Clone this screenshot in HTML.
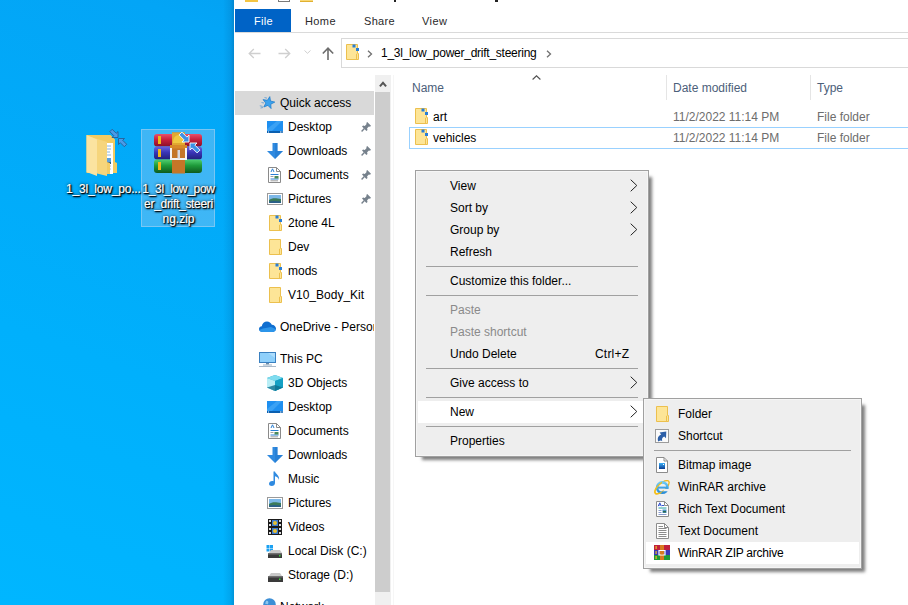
<!DOCTYPE html>
<html><head><meta charset="utf-8">
<style>
*{margin:0;padding:0;box-sizing:border-box}
html,body{width:908px;height:605px;overflow:hidden}
body{position:relative;font-family:"Liberation Sans",sans-serif;font-size:12px;color:#000;
background:linear-gradient(200deg,#0592e0 0%,#03a5f6 30%,#00b0fc 70%,#00b6ff 100%)}
.a{position:absolute}
.t{position:absolute;white-space:pre;line-height:17px;font-size:12px}
svg{position:absolute;overflow:visible}
#win{position:absolute;left:234px;top:0;width:674px;height:605px;background:#fff}
#shadow{position:absolute;left:223px;top:0;width:11px;height:605px;background:linear-gradient(90deg,rgba(0,60,120,0) 0%,rgba(0,60,120,.12) 70%,rgba(0,50,100,.25) 100%)}
.menu{position:absolute;background:#eeeeee;border:1px solid #a0a0a0;box-shadow:inset 0 0 0 1px #f5f5f5,5px 5px 3px -2px rgba(0,0,0,.5)}
.sep{position:absolute;height:1px;background:#a0a0a0}
.hl{position:absolute;background:#fff}
.dis{color:#8a8a8a}
</style></head>
<body>
<div id="shadow"></div>
<!-- desktop icons -->
<div class="a" style="left:141px;top:129px;width:74px;height:98px;background:rgba(205,212,238,.3);border:1px solid rgba(224,226,242,.36)"></div>
<svg style="left:84px;top:128px" width="46" height="50" viewBox="0 0 46 50"><path d="M2.5 7H26.5L31 11.5V34L33 35V45H2.5Z" fill="#f3cb62"/><path d="M21 15H29V46H19Z" fill="#ffffff"/><path d="M22 18H27M22 21H27M22 24H26M22 27H27" stroke="#8ab4dc" stroke-width="1"/><rect x="21" y="30" width="6" height="4" fill="#5aa0e0"/><rect x="21" y="34" width="6" height="2" fill="#2a5a80"/><path d="M22 38H27M22 41H27M22 44H26" stroke="#b0b8c8" stroke-width="1"/><path d="M7 9L23 14V48L7 44Z" fill="#f6d57c"/><path d="M2.5 7L13 11.5V48L2.5 44Z" fill="#fbe3a0"/><path d="M23 34L26 35V46L23 46Z" fill="#f3cc66"/><path d="M10 0L18 0L10 8Z" fill="none"/><path d="M34 9.5V3.5L32.2 5.3L28.2 1.3L25.8 3.7L29.8 7.7L28 9.5Z" fill="#4a9be8" stroke="#26568c" stroke-width=".8" stroke-linejoin="round"/><path d="M34.5 10.5H40.5L38.7 12.3L42.7 16.3L40.3 18.7L36.3 14.7L34.5 16.5Z" fill="#4a9be8" stroke="#26568c" stroke-width=".8" stroke-linejoin="round"/></svg>
<svg style="left:154px;top:131px" width="50" height="43" viewBox="0 0 50 43"><defs><linearGradient id="gr" x1="0" y1="0" x2="0" y2="1"><stop offset="0" stop-color="#e8506a"/><stop offset=".45" stop-color="#c8203c"/><stop offset="1" stop-color="#8a1028"/></linearGradient><linearGradient id="gb" x1="0" y1="0" x2="0" y2="1"><stop offset="0" stop-color="#6a66e0"/><stop offset=".45" stop-color="#3a36b8"/><stop offset="1" stop-color="#22207a"/></linearGradient><linearGradient id="gg" x1="0" y1="0" x2="0" y2="1"><stop offset="0" stop-color="#50d070"/><stop offset=".45" stop-color="#1e9a3a"/><stop offset="1" stop-color="#0e5a20"/></linearGradient></defs><rect x="0" y="3" width="48" height="12.5" rx="3" fill="url(#gr)"/><rect x="0" y="15.5" width="48" height="13" rx="3" fill="url(#gb)"/><rect x="0" y="28.5" width="48" height="13.5" rx="3" fill="url(#gg)"/><rect x="4" y="5" width="3" height="8" fill="#f0b818"/><rect x="4" y="18" width="3" height="8" fill="#f0b818"/><rect x="4" y="31" width="3" height="8" fill="#f0b818"/><rect x="18" y="1.5" width="13" height="41" fill="#c47628"/><path d="M18 1.5H31V15H18Z" fill="#e0a830"/><path d="M19 12C19 6 22 4 25 4C28 4 30 6 30 12Z" fill="#f0c840"/><rect x="16" y="14" width="17" height="3.5" fill="#d88a28"/><path d="M17 17V28H32V17" fill="none" stroke="#f4f4f4" stroke-width="2"/><path d="M23.5 19H26V27.5H23.5Z" fill="#d8d8e0"/><path d="M35 4L35 11L28 11L30.1 8.9L25.1 3.9L27.9 1.1L32.9 6.1Z" fill="#3c90e4" stroke="#fff" stroke-width=".9" stroke-linejoin="round"/><path d="M36 12L43 12L40.9 14.1L45.9 19.1L43.1 21.9L38.1 16.9L36 19Z" fill="#3c90e4" stroke="#fff" stroke-width=".9" stroke-linejoin="round"/></svg>
<div class="t" style="left:66px;top:181px;color:#fff;letter-spacing:-0.2px;text-shadow:1px 1px 1px #000,1px 1px 2px #000,0 0 3px rgba(0,0,0,.75);-webkit-text-stroke:0.2px #fff">1_3l_low_po...</div>
<div class="t" style="left:141px;top:181px;width:75px;text-align:center;color:#fff;text-shadow:1px 1px 1px #000,1px 1px 2px #000,0 0 3px rgba(0,0,0,.75);-webkit-text-stroke:0.2px #fff;letter-spacing:-0.3px">1_3l_low_pow</div>
<div class="t" style="left:141px;top:196px;width:75px;text-align:center;color:#fff;text-shadow:1px 1px 1px #000,1px 1px 2px #000,0 0 3px rgba(0,0,0,.75);-webkit-text-stroke:0.2px #fff;letter-spacing:-0.3px">er_drift_steeri</div>
<div class="t" style="left:141px;top:211px;width:75px;text-align:center;color:#fff;text-shadow:1px 1px 1px #000,1px 1px 2px #000,0 0 3px rgba(0,0,0,.75);-webkit-text-stroke:0.2px #fff">ng.zip</div>
<div id="win"></div>
<!-- title bar remnants -->
<div class="a" style="left:245px;top:0;width:13px;height:2px;background:#f4c542"></div>
<div class="a" style="left:278px;top:0;width:12px;height:2px;border:1px solid #7a7a7a;border-top:0;background:#fff"></div>
<div class="a" style="left:300px;top:0;width:13px;height:2px;background:#f8d775;border-bottom:1px solid #e0b030"></div>
<div class="a" style="left:394px;top:0;width:2px;height:2px;background:#222"></div>
<div class="a" style="left:495px;top:0;width:3px;height:2px;background:#222"></div>
<!-- ribbon tabs -->
<div class="a" style="left:235px;top:9px;width:56px;height:23px;background:#0063c6"></div>
<div class="t" style="left:254px;top:13px;color:#fff;font-size:11px;letter-spacing:0.3px">File</div>
<div class="t" style="left:305px;top:13px;color:#2a2a2a;font-size:11px;letter-spacing:0.4px">Home</div>
<div class="t" style="left:364px;top:13px;color:#2a2a2a;font-size:11px;letter-spacing:0.3px">Share</div>
<div class="t" style="left:422px;top:13px;color:#2a2a2a;font-size:11px;letter-spacing:0.4px">View</div>
<div class="a" style="left:235px;top:32px;width:673px;height:1px;background:#dadada"></div>
<!-- nav buttons -->
<svg style="left:248px;top:48px" width="13" height="11" viewBox="0 0 13 11"><path d="M12.5 5.5H1.2M5.8 1L1.2 5.5L5.8 10" fill="none" stroke="#cfcfcf" stroke-width="1.3"/></svg>
<svg style="left:278px;top:48px" width="13" height="11" viewBox="0 0 13 11"><path d="M0.5 5.5H11.8M7.2 1L11.8 5.5L7.2 10" fill="none" stroke="#cfcfcf" stroke-width="1.3"/></svg>
<svg style="left:304px;top:50px" width="7" height="4" viewBox="0 0 7 4"><path d="M0.5 0.5L3.5 3.3L6.5 0.5" fill="none" stroke="#d0d0d0" stroke-width="1"/></svg>
<svg style="left:322px;top:47px" width="12" height="13" viewBox="0 0 12 13"><path d="M6 13V1.5M0.8 6.5L6 1.2L11.2 6.5" fill="none" stroke="#6d6d6d" stroke-width="1.6"/></svg>
<!-- address bar -->
<div class="a" style="left:341px;top:38px;width:580px;height:30px;border:1px solid #d9d9d9;background:#fff"></div>
<svg style="left:346px;top:44px" width="14" height="16" viewBox="0 0 14 16"><path d="M0.5 0.5H11.5V9.5H12.5V15.5H0.5Z" fill="#fde597" stroke="#ecc04e"/><path d="M10.5 15.5V9.8" stroke="#ecc04e"/><rect x="6.5" y="0.5" width="3" height="3" fill="#2a7ed6"/><rect x="10" y="4" width="3" height="3" fill="#2a7ed6"/></svg>
<svg style="left:367px;top:50px" width="6" height="8" viewBox="0 0 6 8"><path d="M1 0.8L4.5 4L1 7.2" fill="none" stroke="#707070" stroke-width="1.3"/></svg>
<div class="t" style="left:381px;top:45px;letter-spacing:-0.25px">1_3l_low_power_drift_steering</div>
<svg style="left:546px;top:50px" width="6" height="8" viewBox="0 0 6 8"><path d="M1 0.8L4.5 4L1 7.2" fill="none" stroke="#707070" stroke-width="1.3"/></svg>
<!-- nav pane scrollbar -->
<div class="a" style="left:375px;top:75px;width:16px;height:530px;background:#f0f0f0"></div>
<div class="a" style="left:375px;top:92px;width:15px;height:500px;background:#cdcdcd"></div>
<svg style="left:379px;top:81px" width="8" height="6" viewBox="0 0 8 6"><path d="M0.9 5.3L4 1.8L7.1 5.3" fill="none" stroke="#555" stroke-width="2"/></svg>
<div class="a" style="left:393px;top:75px;width:1px;height:530px;background:#f6f6f6"></div>
<!-- quick access highlight -->
<div class="a" style="left:235px;top:91px;width:139px;height:24px;background:#d9d9d9"></div>
<!-- nav pane items -->
<svg style="left:259px;top:96px" width="17" height="14" viewBox="0 0 17 14"><path d="M10.8 0.6L11.5 5.0L15.8 6.1L11.8 8.2L12.1 12.6L8.9 9.4L4.8 11.0L6.8 7.1L4.0 3.6L8.4 4.3Z" fill="#3aa2ee" stroke="#1a78c8" stroke-width="0.7" stroke-linejoin="round"/><path d="M5.5 1.5L8 2.2M2.5 6.5L5 7M0.8 9.8L3.6 10.4M1.5 12L4 11.5" stroke="#3a8ad0" stroke-width="0.8" opacity=".8"/></svg>
<div class="t" style="left:280px;top:95px">Quick access</div>

<svg style="left:267px;top:121px" width="16" height="12" viewBox="0 0 16 12"><rect x="0" y="0" width="16" height="12" fill="#1e8ff0"/><path d="M10 0H15L5 10H0V8Z" fill="#4cadf7" opacity=".6"/><rect x="0" y="10" width="16" height="2" fill="#0a5fb0"/><rect x="1" y="10.5" width="1" height="1" fill="#fff"/><rect x="13" y="10.5" width="1" height="1" fill="#fff"/><rect x="14.5" y="10.5" width="1" height="1" fill="#fff"/></svg>
<div class="t" style="left:288px;top:119px">Desktop</div>
<svg style="left:267px;top:143px" width="16" height="16" viewBox="0 0 16 16"><path d="M5.5 0H10.5V8H16L8 16L0 8H5.5Z" fill="#2f8ae0"/><path d="M8 0H10.5V8H16L8 16Z" fill="#1f75cc" opacity=".5"/></svg>
<div class="t" style="left:288px;top:143px">Downloads</div>
<svg style="left:268px;top:167px" width="13" height="16" viewBox="0 0 13 16"><path d="M0.5 0.5H8.5L12.5 4.5V15.5H0.5Z" fill="#fff" stroke="#8a8a8a"/><path d="M8.5 0.5V4.5H12.5" fill="none" stroke="#8a8a8a"/><path d="M3 5L4.5 1.8L6 5" fill="none" stroke="#2a7fd4" stroke-width="1"/><path d="M2.5 7.5H10.5M2.5 12H10.5" stroke="#2a7fd4" stroke-width="1"/><path d="M2.5 9.5H5.5M2.5 13.8H10" stroke="#888" stroke-width="0.8"/><rect x="6.5" y="9" width="4" height="2.5" fill="#4a8a5a"/></svg>
<div class="t" style="left:288px;top:167px">Documents</div>
<svg style="left:267px;top:193px" width="16" height="12" viewBox="0 0 16 12"><rect x="0.5" y="0.5" width="15" height="11" fill="#fff" stroke="#9a9a9a"/><rect x="2" y="2" width="12" height="8" fill="#7db8e8"/><path d="M2 7C5 5 8 5 14 6V10H2Z" fill="#3b7a5a"/><path d="M2 8.5C6 7.5 10 8 14 8.5V10H2Z" fill="#2a5f8a"/></svg>
<div class="t" style="left:288px;top:191px">Pictures</div>
<svg style="left:361px;top:122px" width="10" height="10" viewBox="0 0 10 10"><path d="M6.2 0L10 3.8L9 4.7L7.9 4.4L6.1 6.2L6.5 7.9L5.4 9L1 4.6L2.1 3.5L3.8 3.9L5.6 2.1L5.3 1Z" fill="#76818c"/><path d="M3.4 6.6L0.6 9.4" stroke="#76818c" stroke-width="1.4"/></svg>
<svg style="left:361px;top:146px" width="10" height="10" viewBox="0 0 10 10"><path d="M6.2 0L10 3.8L9 4.7L7.9 4.4L6.1 6.2L6.5 7.9L5.4 9L1 4.6L2.1 3.5L3.8 3.9L5.6 2.1L5.3 1Z" fill="#76818c"/><path d="M3.4 6.6L0.6 9.4" stroke="#76818c" stroke-width="1.4"/></svg>
<svg style="left:361px;top:170px" width="10" height="10" viewBox="0 0 10 10"><path d="M6.2 0L10 3.8L9 4.7L7.9 4.4L6.1 6.2L6.5 7.9L5.4 9L1 4.6L2.1 3.5L3.8 3.9L5.6 2.1L5.3 1Z" fill="#76818c"/><path d="M3.4 6.6L0.6 9.4" stroke="#76818c" stroke-width="1.4"/></svg>
<svg style="left:361px;top:194px" width="10" height="10" viewBox="0 0 10 10"><path d="M6.2 0L10 3.8L9 4.7L7.9 4.4L6.1 6.2L6.5 7.9L5.4 9L1 4.6L2.1 3.5L3.8 3.9L5.6 2.1L5.3 1Z" fill="#76818c"/><path d="M3.4 6.6L0.6 9.4" stroke="#76818c" stroke-width="1.4"/></svg>

<svg style="left:269px;top:215px" width="14" height="16" viewBox="0 0 14 16"><path d="M0.5 0.5H11.5V9.5H12.5V15.5H0.5Z" fill="#fde597" stroke="#ecc04e"/><path d="M10.5 15.5V9.8" stroke="#ecc04e"/><rect x="6.5" y="0.5" width="3" height="3" fill="#2a7ed6"/><rect x="10" y="4" width="3" height="3" fill="#2a7ed6"/></svg>
<div class="t" style="left:288px;top:215px">2tone 4L</div>
<svg style="left:269px;top:239px" width="14" height="16" viewBox="0 0 14 16"><path d="M0.5 0.5H11.5V9.5H12.5V15.5H0.5Z" fill="#fde597" stroke="#ecc04e"/><path d="M10.5 15.5V9.8" stroke="#ecc04e"/></svg>
<div class="t" style="left:288px;top:239px">Dev</div>
<svg style="left:269px;top:263px" width="14" height="16" viewBox="0 0 14 16"><path d="M0.5 0.5H11.5V9.5H12.5V15.5H0.5Z" fill="#fde597" stroke="#ecc04e"/><path d="M10.5 15.5V9.8" stroke="#ecc04e"/><rect x="6.5" y="0.5" width="3" height="3" fill="#2a7ed6"/><rect x="10" y="4" width="3" height="3" fill="#2a7ed6"/></svg>
<div class="t" style="left:288px;top:263px">mods</div>
<svg style="left:269px;top:287px" width="14" height="16" viewBox="0 0 14 16"><path d="M0.5 0.5H11.5V9.5H12.5V15.5H0.5Z" fill="#fde597" stroke="#ecc04e"/><path d="M10.5 15.5V9.8" stroke="#ecc04e"/></svg>
<div class="t" style="left:288px;top:287px">V10_Body_Kit</div>

<svg style="left:259px;top:321px" width="17" height="11" viewBox="0 0 17 11"><path d="M3.5 11C1.5 11 0 9.7 0 8C0 6.3 1.3 5.3 2.8 5.2C3.2 2.5 5.4 0.5 8 0.5C10.2 0.5 12 1.8 12.8 3.7C15.2 3.8 17 5.5 17 7.5C17 9.6 15.4 11 13.4 11Z" fill="#0f6ed0"/><path d="M0.3 9C1 10.2 2 11 3.5 11H13.4C15.2 11 16.6 10 17 8.3L12 6L4 7.5Z" fill="#2c95ea"/></svg>
<div class="a" style="left:280px;top:319px;width:94px;height:15px;overflow:hidden"><div class="t" style="left:0;top:0">OneDrive - Personal</div></div>

<svg style="left:259px;top:352px" width="17" height="15" viewBox="0 0 17 15"><rect x="0.5" y="0.5" width="16" height="10" fill="#8fd0fb" stroke="#3a80c0"/><path d="M9 1H16V6Z" fill="#b9e3fd" opacity=".7"/><rect x="7" y="11" width="3" height="1.5" fill="#6a8aa8"/><rect x="4" y="12.5" width="9" height="1" fill="#9ab0c4"/><rect x="0" y="14" width="17" height="1" fill="#a9b9c9"/></svg>
<div class="t" style="left:280px;top:351px">This PC</div>
<svg style="left:267px;top:375px" width="16" height="16" viewBox="0 0 16 16"><path d="M8 0L16 3V12.5L8 16L0 12.5V3Z" fill="#1ea6c8"/><path d="M8 0L16 3L8 6L0 3Z" fill="#7fdcef"/><path d="M0 3L8 6V16L0 12.5Z" fill="#b8eef6"/><path d="M8 6L16 3V12.5L8 16Z" fill="#14a0c4"/><path d="M0 12.5L8 10L16 12.5L8 16Z" fill="#0b6f8e" opacity=".8"/></svg>
<div class="t" style="left:288px;top:375px">3D Objects</div>
<svg style="left:267px;top:401px" width="16" height="12" viewBox="0 0 16 12"><rect x="0" y="0" width="16" height="12" fill="#1e8ff0"/><path d="M10 0H15L5 10H0V8Z" fill="#4cadf7" opacity=".6"/><rect x="0" y="10" width="16" height="2" fill="#0a5fb0"/><rect x="1" y="10.5" width="1" height="1" fill="#fff"/><rect x="13" y="10.5" width="1" height="1" fill="#fff"/><rect x="14.5" y="10.5" width="1" height="1" fill="#fff"/></svg>
<div class="t" style="left:288px;top:399px">Desktop</div>
<svg style="left:268px;top:423px" width="13" height="16" viewBox="0 0 13 16"><path d="M0.5 0.5H8.5L12.5 4.5V15.5H0.5Z" fill="#fff" stroke="#8a8a8a"/><path d="M8.5 0.5V4.5H12.5" fill="none" stroke="#8a8a8a"/><path d="M3 5L4.5 1.8L6 5" fill="none" stroke="#2a7fd4" stroke-width="1"/><path d="M2.5 7.5H10.5M2.5 12H10.5" stroke="#2a7fd4" stroke-width="1"/><path d="M2.5 9.5H5.5M2.5 13.8H10" stroke="#888" stroke-width="0.8"/><rect x="6.5" y="9" width="4" height="2.5" fill="#4a8a5a"/></svg>
<div class="t" style="left:288px;top:423px">Documents</div>
<svg style="left:267px;top:447px" width="16" height="16" viewBox="0 0 16 16"><path d="M5.5 0H10.5V8H16L8 16L0 8H5.5Z" fill="#2f8ae0"/><path d="M8 0H10.5V8H16L8 16Z" fill="#1f75cc" opacity=".5"/></svg>
<div class="t" style="left:288px;top:447px">Downloads</div>
<svg style="left:269px;top:471px" width="11" height="15" viewBox="0 0 11 15"><path d="M4.5 0.5H6C6.5 3 11 4.5 10 9C9.5 7 8 5.5 6 5.3V12C6 13.8 4.5 15 2.8 15C1.2 15 0 14.2 0 12.8C0 11.2 1.5 10 3.2 10C3.7 10 4.1 10.1 4.5 10.3Z" fill="#2f8ae0"/></svg>
<div class="t" style="left:288px;top:471px">Music</div>
<svg style="left:267px;top:497px" width="16" height="12" viewBox="0 0 16 12"><rect x="0.5" y="0.5" width="15" height="11" fill="#fff" stroke="#9a9a9a"/><rect x="2" y="2" width="12" height="8" fill="#7db8e8"/><path d="M2 7C5 5 8 5 14 6V10H2Z" fill="#3b7a5a"/><path d="M2 8.5C6 7.5 10 8 14 8.5V10H2Z" fill="#2a5f8a"/></svg>
<div class="t" style="left:288px;top:495px">Pictures</div>
<svg style="left:268px;top:519px" width="14" height="16" viewBox="0 0 14 16"><rect x="0" y="0" width="14" height="16" fill="#1a1a1a"/><rect x="1" y="1" width="2" height="2" fill="#ddd"/><rect x="1" y="5" width="2" height="2" fill="#ddd"/><rect x="1" y="9" width="2" height="2" fill="#ddd"/><rect x="1" y="13" width="2" height="2" fill="#ddd"/><rect x="11" y="1" width="2" height="2" fill="#ddd"/><rect x="11" y="5" width="2" height="2" fill="#ddd"/><rect x="11" y="9" width="2" height="2" fill="#ddd"/><rect x="11" y="13" width="2" height="2" fill="#ddd"/><rect x="4" y="1" width="6" height="6" fill="#3a7ad0"/><rect x="4" y="9" width="6" height="6" fill="#3a7ad0"/><circle cx="7" cy="4" r="2" fill="#e8c030"/><circle cx="7" cy="12" r="2" fill="#e8c030"/></svg>
<div class="t" style="left:288px;top:519px">Videos</div>
<svg style="left:266px;top:545px" width="17" height="14" viewBox="0 0 17 14"><rect x="0.5" y="0" width="3" height="3" fill="#1ba1f2"/><rect x="4" y="0" width="3" height="3" fill="#1ba1f2"/><rect x="0.5" y="3.5" width="3" height="3" fill="#1ba1f2"/><rect x="4" y="3.5" width="3" height="3" fill="#1ba1f2"/><path d="M3 8L5 5H14L16 8V13H3Z" fill="#c8c8c8"/><rect x="2" y="8" width="14" height="5" fill="#3a3a3a"/><rect x="2" y="8" width="14" height="1.5" fill="#707070"/><rect x="13" y="10" width="1.5" height="1.5" fill="#3cd33c"/></svg>
<div class="t" style="left:288px;top:543px">Local Disk (C:)</div>
<svg style="left:268px;top:573px" width="15" height="9" viewBox="0 0 15 9"><path d="M1 3L3 0H12L14 3Z" fill="#c8c8c8"/><rect x="0" y="3" width="15" height="6" fill="#3a3a3a"/><rect x="0" y="3" width="15" height="1.5" fill="#707070"/><rect x="11" y="5.5" width="1.5" height="1.5" fill="#3cd33c"/></svg>
<div class="t" style="left:288px;top:567px">Storage (D:)</div>
<svg style="left:263px;top:598px" width="13" height="13" viewBox="0 0 13 13"><circle cx="6.5" cy="6.5" r="6.3" fill="#3d8fd6"/><path d="M3 3C5 2 6 4 5 6C4 7 3 5 2 6Z" fill="#8cc6ee"/></svg>
<div class="t" style="left:280px;top:599px">Network</div>
<!-- content headers -->
<div class="t" style="left:412px;top:80px;color:#4c607a">Name</div>
<svg style="left:532px;top:75px" width="9" height="5" viewBox="0 0 9 5"><path d="M0.6 4.5L4.5 0.8L8.4 4.5" fill="none" stroke="#505050" stroke-width="1.1"/></svg>
<div class="a" style="left:666px;top:75px;width:1px;height:25px;background:#e5e5e5"></div>
<div class="a" style="left:810px;top:75px;width:1px;height:25px;background:#e5e5e5"></div>
<div class="t" style="left:673px;top:80px;color:#4c607a">Date modified</div>
<div class="t" style="left:817px;top:80px;color:#4c607a">Type</div>
<!-- rows -->
<svg style="left:415px;top:108px" width="14" height="16" viewBox="0 0 14 16"><path d="M0.5 0.5H11.5V9.5H12.5V15.5H0.5Z" fill="#fde597" stroke="#ecc04e"/><path d="M10.5 15.5V9.8" stroke="#ecc04e"/><rect x="6.5" y="0.5" width="3" height="3" fill="#2a7ed6"/><rect x="10" y="4" width="3" height="3" fill="#2a7ed6"/></svg>
<div class="t" style="left:433px;top:109px">art</div>
<div class="t" style="left:673px;top:109px;color:#6d6d6d">11/2/2022 11:14 PM</div>
<div class="t" style="left:817px;top:109px;color:#6d6d6d">File folder</div>
<div class="a" style="left:409px;top:127px;width:520px;height:22px;border:1px solid #99d1ff"></div>
<svg style="left:415px;top:129px" width="14" height="16" viewBox="0 0 14 16"><path d="M0.5 0.5H11.5V9.5H12.5V15.5H0.5Z" fill="#fde597" stroke="#ecc04e"/><path d="M10.5 15.5V9.8" stroke="#ecc04e"/><rect x="6.5" y="0.5" width="3" height="3" fill="#2a7ed6"/><rect x="10" y="4" width="3" height="3" fill="#2a7ed6"/></svg>
<div class="t" style="left:433px;top:130px">vehicles</div>
<div class="t" style="left:673px;top:130px;color:#6d6d6d">11/2/2022 11:14 PM</div>
<div class="t" style="left:817px;top:130px;color:#6d6d6d">File folder</div>

<!-- main context menu -->
<div class="menu" style="left:415px;top:170px;width:234px;height:287px"></div>
<div class="hl" style="left:418px;top:401px;width:228px;height:22px"></div>
<div class="t" style="left:450px;top:178px">View</div>
<div class="t" style="left:450px;top:200px">Sort by</div>
<div class="t" style="left:450px;top:222px">Group by</div>
<div class="t" style="left:450px;top:244px">Refresh</div>
<div class="sep" style="left:426px;top:266px;width:212px"></div>
<div class="t" style="left:450px;top:273px">Customize this folder...</div>
<div class="sep" style="left:426px;top:295px;width:212px"></div>
<div class="t dis" style="left:450px;top:302px">Paste</div>
<div class="t dis" style="left:450px;top:324px">Paste shortcut</div>
<div class="t" style="left:450px;top:346px">Undo Delete</div>
<div class="t" style="left:595px;top:346px;letter-spacing:0.2px">Ctrl+Z</div>
<div class="sep" style="left:426px;top:368px;width:212px"></div>
<div class="t" style="left:450px;top:375px">Give access to</div>
<div class="sep" style="left:426px;top:397px;width:212px"></div>
<div class="t" style="left:450px;top:404px">New</div>
<div class="sep" style="left:426px;top:426px;width:212px"></div>
<div class="t" style="left:450px;top:433px">Properties</div>
<svg style="left:630px;top:179px" width="8" height="13" viewBox="0 0 8 13"><path d="M0.7 0.7L6.8 6.5L0.7 12.3" fill="none" stroke="#222" stroke-width="1"/></svg>
<svg style="left:630px;top:201px" width="8" height="13" viewBox="0 0 8 13"><path d="M0.7 0.7L6.8 6.5L0.7 12.3" fill="none" stroke="#222" stroke-width="1"/></svg>
<svg style="left:630px;top:223px" width="8" height="13" viewBox="0 0 8 13"><path d="M0.7 0.7L6.8 6.5L0.7 12.3" fill="none" stroke="#222" stroke-width="1"/></svg>
<svg style="left:630px;top:376px" width="8" height="13" viewBox="0 0 8 13"><path d="M0.7 0.7L6.8 6.5L0.7 12.3" fill="none" stroke="#222" stroke-width="1"/></svg>
<svg style="left:630px;top:405px" width="8" height="13" viewBox="0 0 8 13"><path d="M0.7 0.7L6.8 6.5L0.7 12.3" fill="none" stroke="#222" stroke-width="1"/></svg>

<!-- submenu -->
<div class="menu" style="left:643px;top:398px;width:219px;height:171px"></div>
<div class="hl" style="left:646px;top:542px;width:213px;height:22px"></div>
<svg style="left:656px;top:406px" width="14" height="16" viewBox="0 0 14 16"><path d="M0.5 0.5H11.5V9.5H12.5V15.5H0.5Z" fill="#fde597" stroke="#ecc04e"/><path d="M10.5 15.5V9.8" stroke="#ecc04e"/></svg>
<div class="t" style="left:678px;top:406px">Folder</div>
<svg style="left:655px;top:429px" width="14" height="14" viewBox="0 0 14 14"><rect x="0.5" y="0.5" width="13" height="13" fill="#fbfbfb" stroke="#9c9c9c"/><path d="M3.2 12.5C2.2 9.5 3 7 6.2 5.6L4.6 3.6L11.3 2.6L11 9.3L9.2 7.6C7.4 8.4 6.6 10 7.2 12.3C6.4 11.2 5.2 11.4 3.2 12.5Z" fill="#2c5fa8"/></svg>
<div class="t" style="left:678px;top:428px">Shortcut</div>
<div class="sep" style="left:654px;top:450px;width:197px"></div>
<svg style="left:656px;top:457px" width="12" height="16" viewBox="0 0 12 16"><defs><linearGradient id="bmg" x1="0" y1="0" x2="0" y2="1"><stop offset="0" stop-color="#3ab0f8"/><stop offset="1" stop-color="#0a3a90"/></linearGradient></defs><path d="M0.5 0.5H8L11.5 4V15.5H0.5Z" fill="#fff" stroke="#8c8c8c"/><path d="M8 0.5V4H11.5" fill="none" stroke="#8c8c8c"/><rect x="3" y="6" width="6" height="6" fill="url(#bmg)"/><rect x="7" y="7" width="1" height="1" fill="#fff"/></svg>
<div class="t" style="left:678px;top:457px">Bitmap image</div>
<svg style="left:653px;top:478px" width="18" height="18" viewBox="0 0 18 18"><defs><clipPath id="ieclip"><path d="M-2 -2H20L-2 20Z"/></clipPath><linearGradient id="ieg" x1="0" y1="0" x2="0" y2="1"><stop offset="0" stop-color="#6ac8f8"/><stop offset="1" stop-color="#2a8ed8"/></linearGradient></defs><ellipse cx="9" cy="9.2" rx="9" ry="3.8" transform="rotate(-42 9 9.2)" fill="none" stroke="#f3b412" stroke-width="1.3"/><circle cx="9.3" cy="9.6" r="5.2" fill="none" stroke="url(#ieg)" stroke-width="2.6"/><rect x="5" y="8.6" width="9.5" height="2" fill="#3fa2e6"/><rect x="10.5" y="11" width="5.5" height="2.2" fill="#eeeeee"/><ellipse cx="9" cy="9.2" rx="9" ry="3.8" transform="rotate(-42 9 9.2)" fill="none" stroke="#f5c018" stroke-width="1.3" clip-path="url(#ieclip)"/></svg>
<div class="t" style="left:678px;top:479px">WinRAR archive</div>
<svg style="left:656px;top:501px" width="13" height="16" viewBox="0 0 13 16"><path d="M0.5 0.5H8.5L12.5 4.5V15.5H0.5Z" fill="#fff" stroke="#8c8c8c"/><path d="M8.5 0.5V4.5H12.5" fill="none" stroke="#8c8c8c"/><path d="M2.2 5.2L3.8 1.8L5.4 5.2M2.9 4H4.7" fill="none" stroke="#3050d0" stroke-width="1"/><path d="M6 4.5H8" stroke="#3050d0"/><path d="M2.5 7H10.5" stroke="#20a0a0" stroke-width="1"/><path d="M2.5 9.5H5.5M2.5 11.5H5.5M2.5 13.5H10.5" stroke="#6a80c0" stroke-width="0.8"/><rect x="6.5" y="8.5" width="4" height="3.5" fill="#4a90c8"/><rect x="7" y="10" width="3" height="1.5" fill="#2a6a50"/></svg>
<div class="t" style="left:678px;top:501px">Rich Text Document</div>
<svg style="left:656px;top:523px" width="13" height="16" viewBox="0 0 13 16"><path d="M0.5 0.5H8.5L12.5 4.5V15.5H0.5Z" fill="#fff" stroke="#8c8c8c"/><path d="M8.5 0.5V4.5H12.5" fill="none" stroke="#8c8c8c"/><path d="M2.5 3.5H7M2.5 5.5H10.5M2.5 7.5H10.5M2.5 9.5H10.5M2.5 11.5H10.5M2.5 13.5H10.5" stroke="#8c8c8c" stroke-width="1"/></svg>
<div class="t" style="left:678px;top:523px">Text Document</div>
<svg style="left:654px;top:545px" width="16" height="15" viewBox="0 0 16 15"><rect x="0" y="0" width="16" height="5" fill="#c0203c"/><rect x="0" y="5" width="16" height="5" fill="#3a38b8"/><rect x="0" y="10" width="16" height="5" fill="#1f9a38"/><rect x="6" y="0" width="4" height="15" fill="#d87a20"/><path d="M5 5.5H11V10H5Z" fill="none" stroke="#fff" stroke-width="1.2"/><rect x="7.3" y="6.5" width="1.4" height="3" fill="#d87a20"/><rect x="1.5" y="1" width="1.2" height="3" fill="#f0c020"/><rect x="1.5" y="6" width="1.2" height="3" fill="#f0c020"/><rect x="1.5" y="11" width="1.2" height="3" fill="#f0c020"/></svg>
<div class="t" style="left:678px;top:545px;letter-spacing:-0.25px">WinRAR ZIP archive</div>

</body></html>
